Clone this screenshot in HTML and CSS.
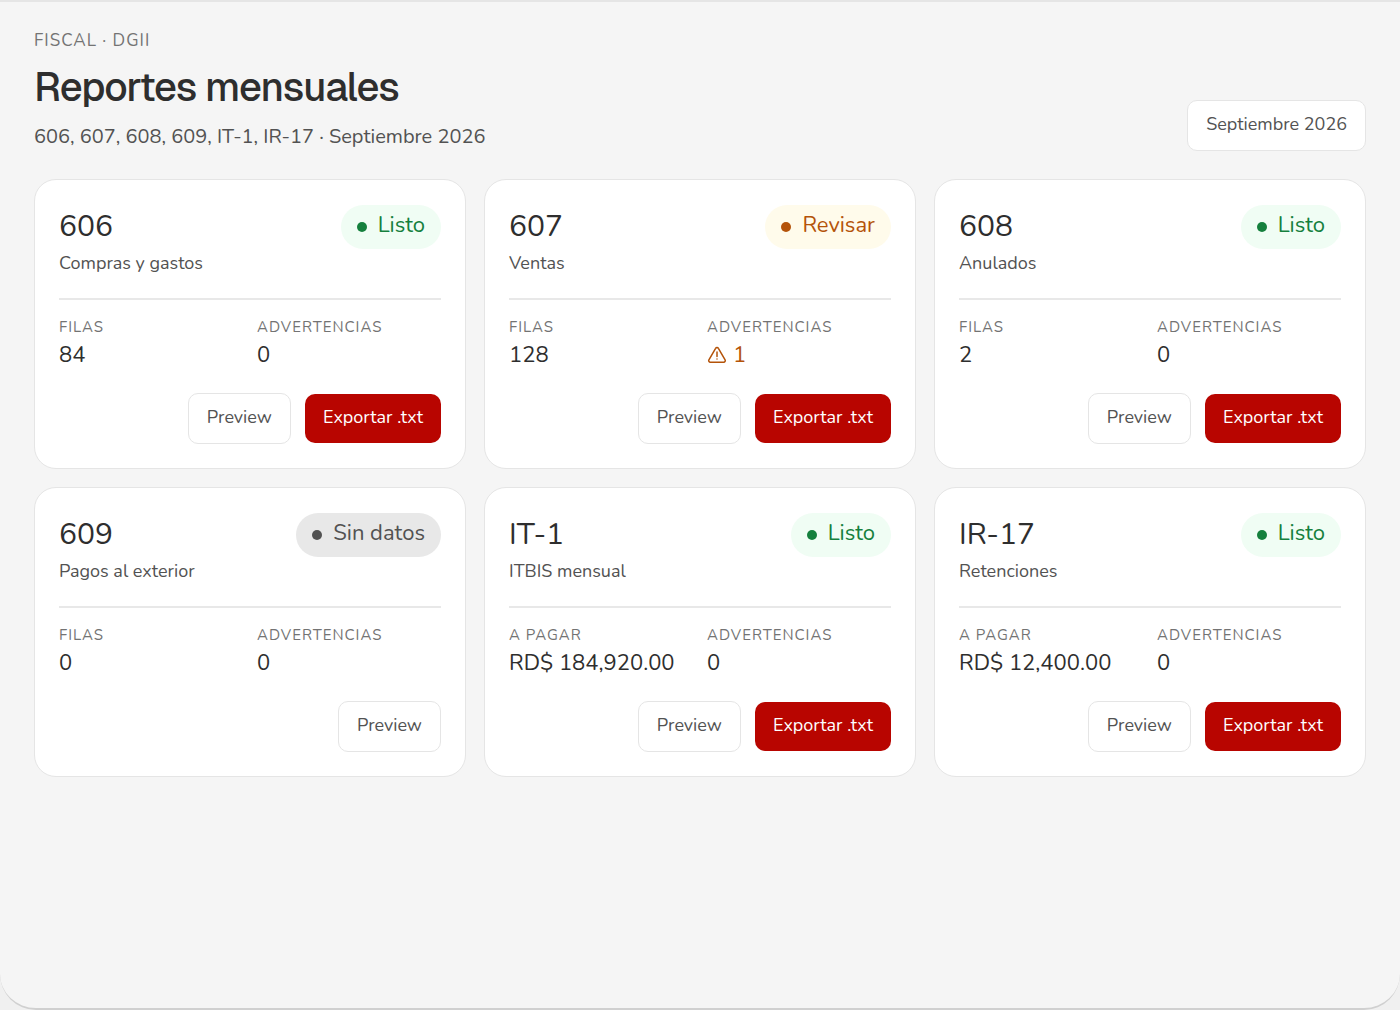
FILE: index.html
```html
<!DOCTYPE html>
<html lang="es">
<head>
<meta charset="utf-8">
<meta name="viewport" content="width=device-width, initial-scale=1">
<title>Reportes mensuales</title>
<link rel="stylesheet" href="styles.css">
</head>
<body>
<main class="panel">
  <header class="page-header">
    <div>
      <p class="eyebrow">FISCAL · DGII</p>
      <h1 class="page-title">Reportes mensuales</h1>
      <p class="page-subtitle">606, 607, 608, 609, IT-1, IR-17 · Septiembre 2026</p>
    </div>
    <button class="btn btn-outline" type="button">Septiembre 2026</button>
  </header>

  <section class="reports">
    <article class="card">
      <div class="card-head">
        <h2 class="card-title">606</h2>
        <span class="badge badge-ok">Listo</span>
      </div>
      <p class="card-desc">Compras y gastos</p>
      <dl class="stats">
        <div><dt>FILAS</dt><dd>84</dd></div>
        <div><dt>ADVERTENCIAS</dt><dd>0</dd></div>
      </dl>
      <div class="actions">
        <button class="btn btn-outline" type="button">Preview</button>
        <button class="btn btn-primary" type="button">Exportar .txt</button>
      </div>
    </article>

    <article class="card">
      <div class="card-head">
        <h2 class="card-title">607</h2>
        <span class="badge badge-warn">Revisar</span>
      </div>
      <p class="card-desc">Ventas</p>
      <dl class="stats">
        <div><dt>FILAS</dt><dd>128</dd></div>
        <div>
          <dt>ADVERTENCIAS</dt>
          <dd class="warning">
            <svg class="icon" viewBox="0 0 20 20" aria-hidden="true"><path d="M8.600 3.300 1.900 14.800a1.600 1.600 0 0 0 1.400 2.400h13.400a1.600 1.600 0 0 0 1.400-2.400L11.400 3.300a1.600 1.600 0 0 0-2.800 0Z"/><path d="M10 7v4.500"/><path d="M10 14h.01"/></svg>
            1
          </dd>
        </div>
      </dl>
      <div class="actions">
        <button class="btn btn-outline" type="button">Preview</button>
        <button class="btn btn-primary" type="button">Exportar .txt</button>
      </div>
    </article>

    <article class="card">
      <div class="card-head">
        <h2 class="card-title">608</h2>
        <span class="badge badge-ok">Listo</span>
      </div>
      <p class="card-desc">Anulados</p>
      <dl class="stats">
        <div><dt>FILAS</dt><dd>2</dd></div>
        <div><dt>ADVERTENCIAS</dt><dd>0</dd></div>
      </dl>
      <div class="actions">
        <button class="btn btn-outline" type="button">Preview</button>
        <button class="btn btn-primary" type="button">Exportar .txt</button>
      </div>
    </article>

    <article class="card">
      <div class="card-head">
        <h2 class="card-title">609</h2>
        <span class="badge badge-empty">Sin datos</span>
      </div>
      <p class="card-desc">Pagos al exterior</p>
      <dl class="stats">
        <div><dt>FILAS</dt><dd>0</dd></div>
        <div><dt>ADVERTENCIAS</dt><dd>0</dd></div>
      </dl>
      <div class="actions">
        <button class="btn btn-outline" type="button">Preview</button>
      </div>
    </article>

    <article class="card">
      <div class="card-head">
        <h2 class="card-title">IT-1</h2>
        <span class="badge badge-ok">Listo</span>
      </div>
      <p class="card-desc">ITBIS mensual</p>
      <dl class="stats">
        <div><dt>A PAGAR</dt><dd>RD$ 184,920.00</dd></div>
        <div><dt>ADVERTENCIAS</dt><dd>0</dd></div>
      </dl>
      <div class="actions">
        <button class="btn btn-outline" type="button">Preview</button>
        <button class="btn btn-primary" type="button">Exportar .txt</button>
      </div>
    </article>

    <article class="card">
      <div class="card-head">
        <h2 class="card-title">IR-17</h2>
        <span class="badge badge-ok">Listo</span>
      </div>
      <p class="card-desc">Retenciones</p>
      <dl class="stats">
        <div><dt>A PAGAR</dt><dd>RD$ 12,400.00</dd></div>
        <div><dt>ADVERTENCIAS</dt><dd>0</dd></div>
      </dl>
      <div class="actions">
        <button class="btn btn-outline" type="button">Preview</button>
        <button class="btn btn-primary" type="button">Exportar .txt</button>
      </div>
    </article>
  </section>
</main>
</body>
</html>
```

FILE: styles.css
```css
*,
*::before {
  box-sizing: border-box;
}

body {
  margin: 0;
  background: #f0f0f0;
  color: #2e2e2e;
  font-family: Nunito, Lato, sans-serif;
  font-size: 22px;
}

h1, h2, p, dl, dd {
  margin: 0;
}

.panel {
  min-height: 100vh;
  padding: 25px 34px;
  background: #f5f5f5;
  border-top: 2px solid #e5e5e5;
  border-bottom: 2px solid #d0d0d0;
  border-radius: 0 0 36px 36px;
}

.page-header {
  display: flex;
  align-items: flex-end;
  justify-content: space-between;
  gap: 24px;
  margin-bottom: 28px;
}

.eyebrow {
  color: #737373;
  font-size: 17px;
  line-height: 28px;
  letter-spacing: 1px;
}

.page-title {
  margin: 6px 0 10px;
  font-family: Geist, Inter, sans-serif;
  font-size: 40px;
  font-weight: 500;
  line-height: 52px;
  letter-spacing: -1px;
}

.page-subtitle {
  color: #525252;
  font-size: 20px;
  line-height: 28px;
}

.reports {
  display: grid;
  grid-template-columns: repeat(3, minmax(0, 1fr));
  gap: 18px;
}

.card {
  padding: 25px 24px 24px;
  background: #fff;
  border: 1px solid #e5e5e5;
  border-radius: 22px;
}

.card-head {
  display: flex;
  align-items: center;
  justify-content: space-between;
}

.card-title {
  font-size: 30px;
  font-weight: 400;
  line-height: 44px;
}

.card-desc {
  padding-bottom: 21px;
  border-bottom: 2px solid #e8e8e8;
  color: #525252;
  font-size: 18px;
  line-height: 28px;
}

.badge {
  display: flex;
  align-items: center;
  gap: 11px;
  padding: 6px 16px 10px;
  border-radius: 22px;
  line-height: 28px;
}

.badge::before {
  content: "";
  width: 10px;
  height: 10px;
  margin-top: 4px;
  border-radius: 50%;
  background: currentColor;
}

.badge-ok {
  background: #f0fdf4;
  color: #15803d;
}

.badge-warn {
  background: #fffbeb;
  color: #b45309;
}

.badge-empty {
  background: #e8e8e8;
  color: #525252;
}

.stats {
  display: grid;
  grid-template-columns: repeat(2, minmax(0, 1fr));
  gap: 14px;
  padding: 15px 0 22px;
}

.stats dt {
  color: #737373;
  font-size: 15px;
  line-height: 24px;
  letter-spacing: 1px;
}

.stats dd {
  line-height: 32px;
  white-space: nowrap;
}

.stats .warning {
  display: flex;
  align-items: center;
  gap: 6px;
  color: #b45309;
}

.icon {
  width: 20px;
  height: 20px;
  fill: none;
  stroke: currentColor;
  stroke-width: 1.5;
  stroke-linecap: round;
  stroke-linejoin: round;
}

.actions {
  display: flex;
  align-items: center;
  justify-content: flex-end;
  gap: 14px;
}

.btn {
  padding: 11px 18px 14px;
  border: 0;
  border-radius: 10px;
  font: inherit;
  font-size: 18px;
  line-height: 24px;
  white-space: nowrap;
  cursor: pointer;
}

.btn-outline {
  border: 1px solid #e5e5e5;
  background: #fff;
  color: #525252;
}

.btn-primary {
  background: #b80500;
  color: #fff;
}
```
